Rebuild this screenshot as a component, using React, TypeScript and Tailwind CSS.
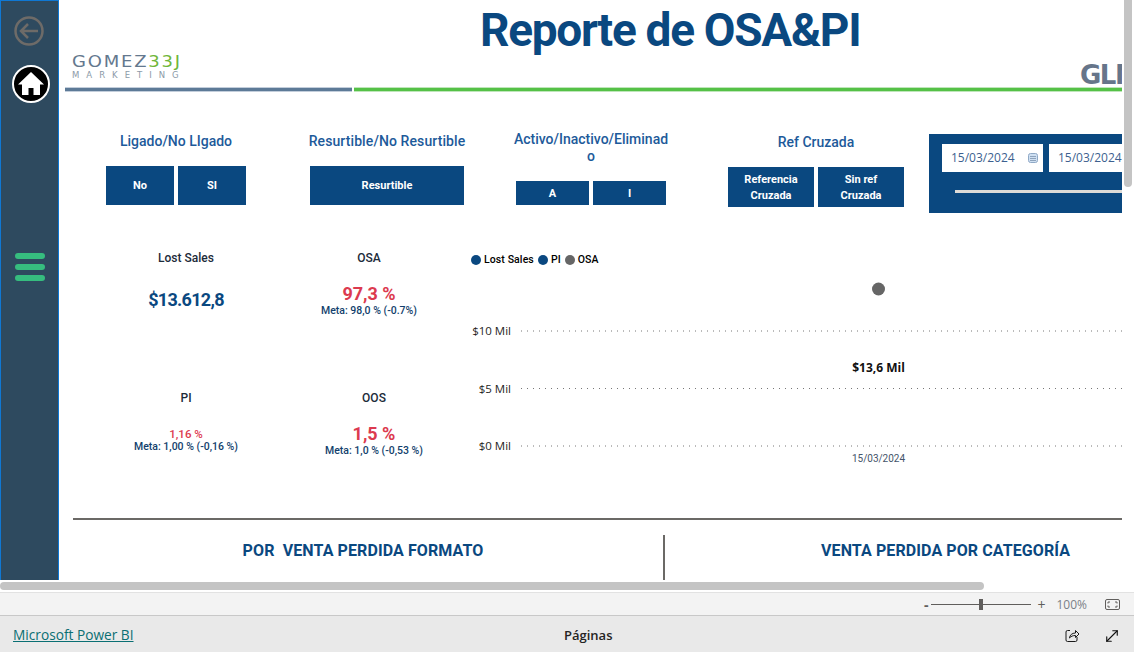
import React from 'react';
import { MoveDiagonal } from 'lucide-react';

const din = "font-['Roboto',sans-serif]";
const ui = "font-['Open_Sans',sans-serif]";

const SlicerButton = ({ label, className }: { label: React.ReactNode; className: string }) => (
  <div className={`flex items-center justify-center bg-[#0a4880] pt-[1px] text-center text-[11px] font-bold leading-4 text-white ${className}`}>
    {label}
  </div>
);

interface KpiProps {
  label: string;
  value: string;
  meta?: string;
  className: string;
  valueClass: string;
}

const Kpi = ({ label, value, meta, className, valueClass }: KpiProps) => (
  <div className={`flex h-[140px] flex-col items-center ${className}`}>
    <div className="h-4 whitespace-nowrap text-[12px] font-medium leading-4 text-[#1c2b3a]">{label}</div>
    <div className={`whitespace-nowrap font-bold ${valueClass}`}>{value}</div>
    {meta && <div className="whitespace-nowrap text-[10.5px] font-medium leading-3 text-[#123f6d]">{meta}</div>}
  </div>
);

const LegendItem = ({ label, color }: { label: string; color: string }) => (
  <div className="flex items-center gap-[3px]">
    <span className={`h-2.5 w-2.5 rounded-full ${color}`} />
    <span className="text-[10.5px] font-medium tracking-[0.1px] text-black">{label}</span>
  </div>
);

const Chart = () => (
  <svg width="652" height="210" className="block">
    {[
      { y: 61, label: '$10 Mil' },
      { y: 118.5, label: '$5 Mil' },
      { y: 176, label: '$0 Mil' },
    ].map((tick) => (
      <g key={tick.label}>
        <line x1="51" x2="652" y1={tick.y} y2={tick.y} stroke="#777777" strokeWidth="1" strokeDasharray="1 5" />
        <text x="41" y={tick.y + 4} textAnchor="end" fontSize="11.5" fill="#252423" fontFamily="Open Sans">
          {tick.label}
        </text>
      </g>
    ))}
    <circle cx="408.5" cy="19" r="6.5" fill="#666666" />
    <text x="408.5" y="102" textAnchor="middle" fontSize="12" fontWeight="700" fill="#111111" fontFamily="Open Sans">
      $13,6 Mil
    </text>
    <text x="408.5" y="192" textAnchor="middle" fontSize="10" fill="#44546a" fontFamily="Roboto">
      15/03/2024
    </text>
  </svg>
);

const Sidebar = () => (
  <div className="flex h-full w-[59px] shrink-0 flex-col border-x border-t border-[#0f78d4] bg-[#2e4a5f]">
    <svg width="30" height="30" viewBox="0 0 30 30" className="ml-[13px] mt-[15px] block">
      <circle cx="15" cy="15" r="13.5" fill="none" stroke="#6e6b68" strokeWidth="2.5" />
      <path d="M24 15H7M14 8l-7 7 7 7" fill="none" stroke="#6e6b68" strokeWidth="2.5" />
    </svg>
    <svg width="38" height="38" viewBox="0 0 38 38" className="ml-[11px] mt-[19px] block">
      <circle cx="19" cy="19" r="18" fill="#000000" stroke="#ffffff" strokeWidth="2" />
      <path d="M19 7 6 19.5h4V30h6.5v-7h5v7H28V19.5h4z" fill="#ffffff" />
    </svg>
    <div className="ml-[14px] mt-[150px] flex w-[30px] flex-col gap-[5px]">
      <div className="h-1.5 rounded-full bg-[#36bd7f]" />
      <div className="h-1.5 rounded-full bg-[#36bd7f]" />
      <div className="h-1.5 rounded-full bg-[#36bd7f]" />
    </div>
  </div>
);

const Header = () => (
  <>
    <div className="ml-[421px] h-[55px] whitespace-nowrap text-[46px] font-bold leading-[60px] tracking-[-1.3px] text-[#0a4880]">Reporte de OSA&amp;PI</div>
    <div className="flex h-[32px] justify-between">
      <div className="ml-[13px] flex flex-col font-['DejaVu_Sans',sans-serif]">
        <div className="origin-left scale-x-[1.2] whitespace-nowrap text-[15px] leading-[14px] tracking-[1.5px]">
          <span className="text-[#64788e]">GOMEZ</span>
          <span className="text-[#6fb63a]">33J</span>
        </div>
        <div className="mt-[1px] whitespace-nowrap text-[8.5px] leading-[10px] tracking-[7px] text-[#8c9aa8]">MARKETING</div>
      </div>
      <div className="mt-[8px] w-[42px] overflow-hidden whitespace-nowrap font-['DejaVu_Sans',sans-serif] text-[26px] font-bold leading-[24px] tracking-[-1.5px] text-[#66758a]">GLM</div>
    </div>
    <div className="flex h-[5px] gap-[2px]">
      <div className="ml-[6px] w-[287px] border-y border-[#c3cedb] bg-[#5d7a97]" />
      <div className="flex-1 border-y border-[#bfe6ba] bg-[#55c147]" />
    </div>
  </>
);

const Filters = () => (
  <div className="mt-[41px] flex h-[80px] items-start">
    <div className="ml-[47px] w-[140px] shrink-0">
      <div className="h-4 whitespace-nowrap text-center text-[14px] font-medium leading-4 text-[#1d5a9a]">Ligado/No LIgado</div>
      <div className="mt-[17px] flex gap-[4px]">
        <SlicerButton label="No" className="h-[39px] flex-1" />
        <SlicerButton label="SI" className="h-[39px] flex-1" />
      </div>
    </div>
    <div className="ml-[64px] w-[154px] shrink-0">
      <div className="-mx-2 h-4 whitespace-nowrap text-center text-[14px] font-medium leading-4 tracking-[0.1px] text-[#1d5a9a]">Resurtible/No Resurtible</div>
      <SlicerButton label="Resurtible" className="mt-[17px] h-[39px]" />
    </div>
    <div className="ml-[52px] -mt-[2px] w-[150px] shrink-0">
      <div className="-mx-2 h-[34px] whitespace-nowrap text-center text-[14px] font-medium leading-[17px] text-[#1d5a9a]">
        Activo/Inactivo/Eliminad
        <br />o
      </div>
      <div className="mt-[16px] flex gap-[4px]">
        <SlicerButton label="A" className="h-[24px] flex-1" />
        <SlicerButton label="I" className="h-[24px] flex-1" />
      </div>
    </div>
    <div className="ml-[62px] mt-[1px] w-[176px] shrink-0">
      <div className="h-4 whitespace-nowrap text-center text-[14px] font-medium leading-4 text-[#1d5a9a]">Ref Cruzada</div>
      <div className="mt-[17px] flex gap-[4px]">
        <SlicerButton label={<>Referencia<br />Cruzada</>} className="h-[40px] flex-1" />
        <SlicerButton label={<>Sin ref<br />Cruzada</>} className="h-[40px] flex-1" />
      </div>
    </div>
    <div className={`ml-[25px] mt-[1px] h-[79px] w-[240px] shrink-0 bg-[#0a4880] pl-[13px] pt-[10px] ${ui}`}>
      <div className="flex gap-[6px]">
        <div className="flex h-[28px] w-[101px] items-center justify-between bg-white pl-[9px] pr-[5px] text-[12px] text-[#3d5f8f]">
          15/03/2024
          <svg width="10" height="10" viewBox="0 0 10 10">
            <rect x="0.5" y="0.5" width="9" height="9" rx="2" fill="#cfe0f2" stroke="#8fa9c6" />
            <path d="M2 3.500h6M2 5.500h6M2 7.500h6" stroke="#7d93ad" strokeWidth="0.8" />
          </svg>
        </div>
        <div className="flex h-[28px] w-[101px] items-center bg-white pl-[9px] text-[12px] text-[#3d5f8f]">15/03/2024</div>
      </div>
      <div className="ml-[13px] mt-[18px] h-[3px] bg-[#dedbd7]" />
    </div>
  </div>
);

const Metrics = () => (
  <div className="mt-[37px] flex h-[268px] items-start">
    <div className="ml-[14px] grid w-[366px] shrink-0 grid-cols-[226px_140px]">
      <Kpi label="Lost Sales" value="$13.612,8" className="" valueClass="mt-[22px] text-[18px] leading-6 tracking-[-0.7px] text-[#0a4880]" />
      <Kpi label="OSA" value="97,3 %" meta="Meta: 98,0 % (-0.7%)" className="" valueClass="mt-[17px] text-[18px] leading-[22px] text-[#dc3a4f]" />
      <Kpi label="PI" value="1,16 %" meta="Meta: 1,00 % (-0,16 %)" className="" valueClass="mt-[21px] text-[11.5px] font-medium leading-[14px] text-[#dc3a4f]" />
      <Kpi label="OOS" value="1,5 %" meta="Meta: 1,0 % (-0,53 %)" className="ml-[10px]" valueClass="mt-[17px] text-[18px] leading-[22px] text-[#dc3a4f]" />
    </div>
    <div className="ml-[31px] w-[652px] shrink-0">
      <div className="flex h-5 items-center gap-[4px] pl-[1px]">
        <LegendItem label="Lost Sales" color="bg-[#0a4880]" />
        <LegendItem label="PI" color="bg-[#0a4880]" />
        <LegendItem label="OSA" color="bg-[#666666]" />
      </div>
      <Chart />
    </div>
  </div>
);

const Sections = () => (
  <>
    <div className="ml-[14px] h-[2px] bg-[#6b6966]" />
    <div className="flex h-[60px] items-start">
      <div className="ml-[8px] mt-[22px] w-[592px] shrink-0 whitespace-pre text-center text-[16px] font-bold leading-[18px] tracking-[0.1px] text-[#0a4880]">POR  VENTA PERDIDA FORMATO</div>
      <div className="ml-[4px] mt-[15px] h-[45px] w-[2px] shrink-0 bg-[#6b6966]" />
      <div className="ml-[156px] mt-[22px] whitespace-nowrap text-[16px] font-bold leading-[18px] tracking-[0.1px] text-[#0a4880]">VENTA PERDIDA POR CATEGORÍA</div>
    </div>
  </>
);

const ZoomBar = () => (
  <div className={`flex h-6 items-center justify-end border-y border-[#e2e2e2] border-b-[#c8c8c8] bg-[#f3f3f3] pr-[14px] pt-[1px] text-[12px] text-[#605e5c] ${ui}`}>
    <span className="text-[14px] font-bold">-</span>
    <div className="relative ml-[3px] h-[1px] w-[100px] bg-[#605e5c]">
      <div className="absolute left-[48px] top-[-5px] h-[11px] w-1 bg-[#605e5c]" />
    </div>
    <span className="ml-[6px] text-[14px]">+</span>
    <span className="ml-[11px] text-[#7a7f87]">100%</span>
    <svg width="15" height="11" viewBox="0 0 15 11" className="ml-[18px]">
      <rect x="0.5" y="0.5" width="14" height="10" rx="1.5" fill="none" stroke="#605e5c" />
      <path d="M3 4.500V3h2M12 4.500V3h-2M3 6.500V8h2M12 6.500V8h-2" fill="none" stroke="#605e5c" />
    </svg>
  </div>
);

const FooterBar = () => (
  <div className={`flex h-[37px] items-center bg-[#e9e9e9] pl-[13px] pr-[13px] pt-[3px] ${ui}`}>
    <span className="w-[120px] whitespace-nowrap text-[13.7px] text-[#0a6f73] underline">Microsoft Power BI</span>
    <span className="ml-[431px] w-[50px] whitespace-nowrap text-[13px] font-semibold text-[#252423]">Páginas</span>
    <svg width="15" height="15" viewBox="0 0 15 15" className="ml-auto">
      <path d="M5 2.500H2.500a1.500 1.500 0 0 0-1.500 1.500v8a1.500 1.500 0 0 0 1.500 1.500h8a1.500 1.500 0 0 0 1.500-1.500v-3" fill="none" stroke="#1a1a1a" />
      <path d="M4.500 10c.3-3 2.500-5 6-5V2.500L14 6l-3.500 3.500V7.500c-2.500 0-4.500.7-6 2.500z" fill="none" stroke="#1a1a1a" />
    </svg>
    <MoveDiagonal size={18} strokeWidth={1.5} className="ml-[23px] text-[#111111]" />
  </div>
);

export default function App() {
  return (
    <div className="flex h-screen w-full flex-col overflow-hidden bg-white">
      <div className="flex h-[580px] shrink-0">
        <Sidebar />
        <div className={`h-full w-[1063px] shrink-0 overflow-hidden ${din}`}>
          <Header />
          <Filters />
          <Metrics />
          <Sections />
        </div>
        <div className="ml-[2px] h-[187px] w-2 rounded-b-full bg-[#c4c4c4]" />
      </div>
      <div className="h-3 shrink-0 pt-[2px]">
        <div className="h-2 w-[984px] rounded-full bg-[#c4c4c4]" />
      </div>
      <ZoomBar />
      <FooterBar />
    </div>
  );
}
